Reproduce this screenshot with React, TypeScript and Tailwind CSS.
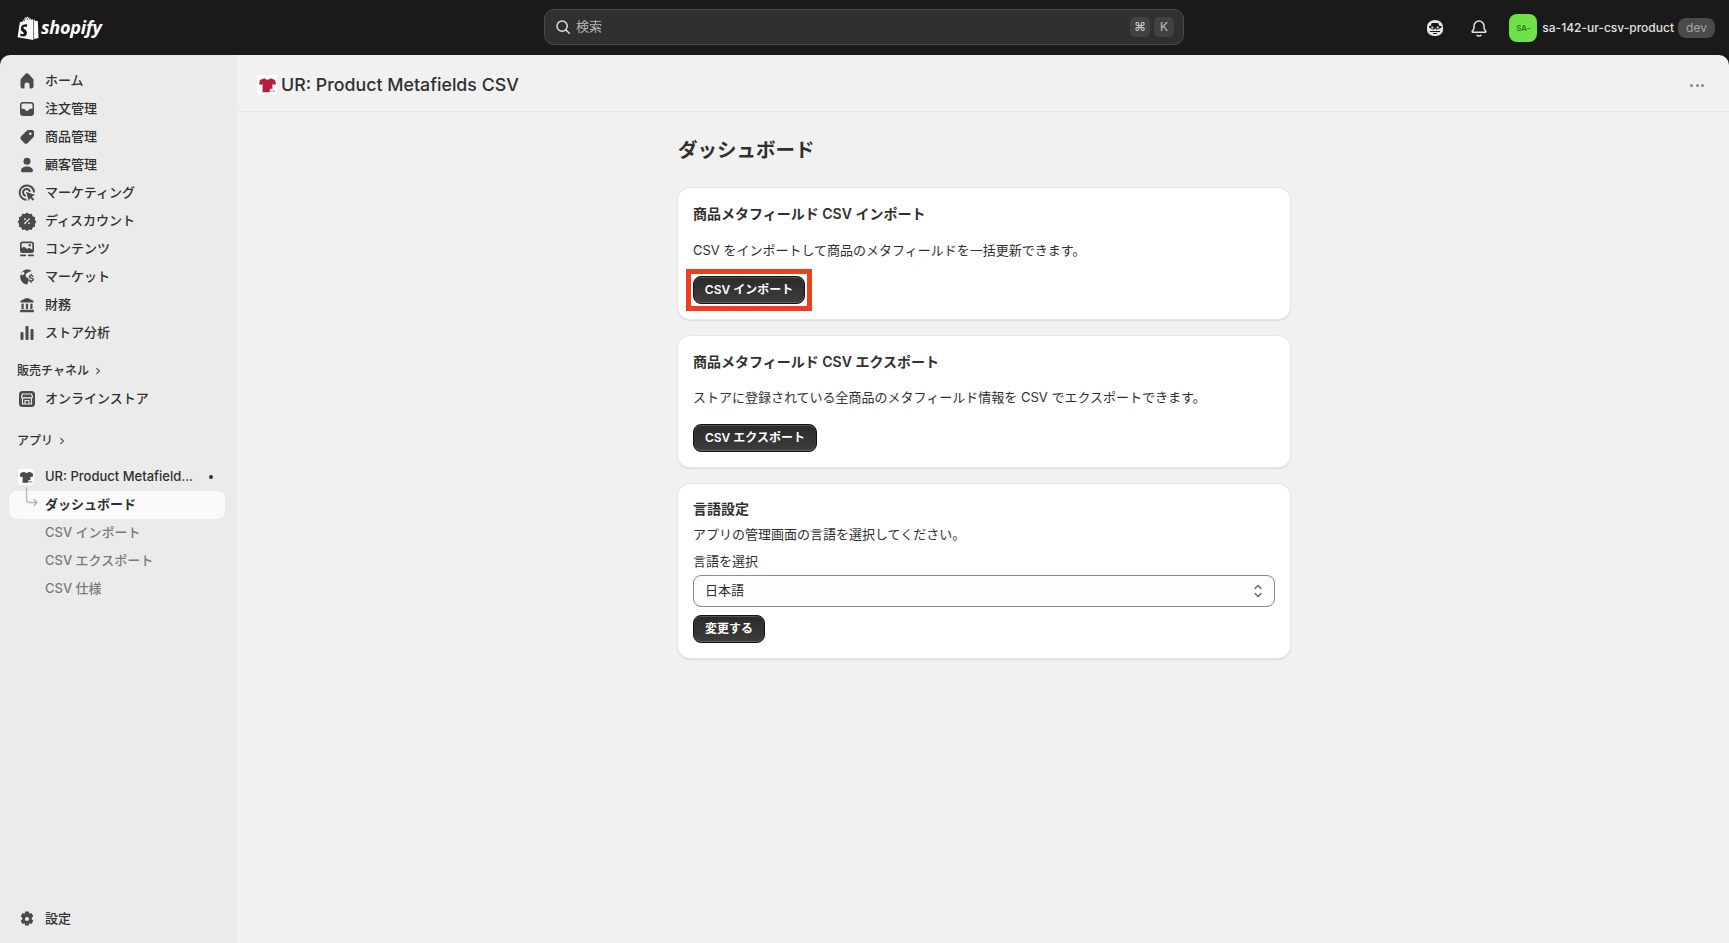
import React from 'react'

const FONT = "[font-family:Inter,'Noto_Sans_CJK_JP',sans-serif]"

type IconProps = { className?: string }

function HomeIcon({ className }: IconProps) {
  return (
    <svg viewBox="0 0 20 20" className={className} fill="currentColor">
      <path d="M8.300 3.100a2.300 2.300 0 0 1 3.400 0l4 4.300c.5.5.8 1.200.8 1.900V15a2.500 2.500 0 0 1-2.500 2.500h-1.500V14a2.500 2.500 0 0 0-5 0v3.500H6A2.500 2.500 0 0 1 3.500 15V9.300c0-.7.3-1.400.8-1.900z" />
    </svg>
  )
}

function OrdersIcon({ className }: IconProps) {
  return (
    <svg viewBox="0 0 20 20" className={className} fill="currentColor">
      <path
        fillRule="evenodd"
        d="M6.250 3h7.500A3.250 3.250 0 0 1 17 6.250v7.500A3.250 3.250 0 0 1 13.750 17h-7.500A3.250 3.250 0 0 1 3 13.750v-7.500A3.250 3.250 0 0 1 6.250 3zM4.500 6.250v3.600H7a1 1 0 0 1 .9.600c.4.900 1.200 1.400 2.100 1.400s1.700-.5 2.100-1.400a1 1 0 0 1 .9-.6h2.500v-3.600c0-.97-.78-1.750-1.750-1.750h-7.500c-.97 0-1.750.78-1.750 1.750z"
      />
    </svg>
  )
}

function TagIcon({ className }: IconProps) {
  return (
    <svg viewBox="0 0 20 20" className={className} fill="currentColor">
      <path
        fillRule="evenodd"
        d="M11.600 3H15a2 2 0 0 1 2 2v3.400c0 .8-.3 1.600-.9 2.100l-5.400 5.400a2.500 2.500 0 0 1-3.500 0l-3.100-3.100a2.500 2.500 0 0 1 0-3.500l5.400-5.400c.5-.6 1.300-.9 2.100-.9zM13.300 8a1.300 1.300 0 1 0 0-2.600 1.300 1.300 0 0 0 0 2.600z"
      />
    </svg>
  )
}

function PersonIcon({ className }: IconProps) {
  return (
    <svg viewBox="0 0 20 20" className={className} fill="currentColor">
      <circle cx="10" cy="6.300" r="3.500" />
      <path d="M10 11.500c-3.500 0-6 1.700-6 4.100 0 1 .7 1.700 1.700 1.700h8.600c1 0 1.700-.7 1.700-1.700 0-2.400-2.500-4.100-6-4.100z" />
    </svg>
  )
}

function TargetIcon({ className }: IconProps) {
  return (
    <svg viewBox="0 0 20 20" className={className} fill="none" stroke="currentColor">
      <path strokeWidth="2" d="M8.700 16.700A7.200 7.200 0 1 1 17 8.700" strokeLinecap="round" />
      <path strokeWidth="2" d="M8 12.600a3.500 3.500 0 1 1 4.700-4.600" strokeLinecap="round" />
      <path fill="currentColor" stroke="none" d="M9 8.800l9.200 3.300-3.500 1.500 2.500 2.700-1.500 1.400-2.500-2.700-1.300 3.300z" />
    </svg>
  )
}

function DiscountIcon({ className }: IconProps) {
  return (
    <svg viewBox="0 0 20 20" className={className}>
      <path
        fill="currentColor"
        d="M10 1.500l2.100 1.600 2.600-.4 1 2.500 2.500 1-.4 2.600 1.600 2.100-1.600 2 .4 2.600-2.500 1-1 2.500-2.600-.4-2.100 1.600-2.100-1.600-2.600.4-1-2.500-2.500-1 .4-2.600-1.600-2 1.600-2.100-.4-2.600 2.500-1 1-2.500 2.600.4z"
      />
      <path stroke="#ebebeb" strokeWidth="1.300" strokeLinecap="round" d="M7.700 12.500l4.600-4.600" />
      <circle cx="7.900" cy="8.200" r=".9" fill="#ebebeb" />
      <circle cx="12.100" cy="12.200" r=".9" fill="#ebebeb" />
    </svg>
  )
}

function ContentIcon({ className }: IconProps) {
  return (
    <svg viewBox="0 0 20 20" className={className} fill="currentColor">
      <path
        fillRule="evenodd"
        d="M5.500 2.500h9A2.500 2.500 0 0 1 17 5v6.500a2.500 2.500 0 0 1-2.500 2.500h-9A2.500 2.500 0 0 1 3 11.500V5a2.500 2.500 0 0 1 2.500-2.500zM4.700 5v4.300l2.300-1.700 3 2.400 2-1.300 3.300 1.800V5a.8.8 0 0 0-.8-.8h-9a.8.8 0 0 0-.8.800zM12.700 7.500a1.200 1.200 0 1 0 0-2.400 1.200 1.200 0 0 0 0 2.400z"
      />
      <rect x="3" y="15.600" width="6.200" height="1.600" rx=".8" />
      <rect x="10.800" y="15.600" width="6.200" height="1.600" rx=".8" />
    </svg>
  )
}

function MarketsIcon({ className }: IconProps) {
  return (
    <svg viewBox="0 0 20 20" className={className} fill="currentColor">
      <path d="M9.700 2.200c1.900 0 3.600.7 4.900 1.800l-3.300 1.300L8.500 7.300l.5 2.700 2.200 1.100.4 3-1.300 3.400a7.700 7.700 0 0 1-.6-15.300z" />
      <path d="M4.600 5.600l2.400-.8.500 1.700-1.500 1.700-2.300-.7z" fill="#ebebeb" />
      <path d="M14.800 6.800v1.100c1 .1 1.900.7 2.100 1.700l-1.400.3c-.1-.5-.5-.8-1.200-.8-.7 0-1 .3-1 .7 0 .5.500.6 1.300.8 1.200.2 2.400.6 2.400 2 0 1.100-.9 1.800-2.200 1.900v1.300h-1.400v-1.300c-1.100-.2-1.900-.9-2.100-1.900l1.400-.3c.2.700.7 1 1.500 1 .8 0 1.300-.3 1.300-.7 0-.5-.5-.7-1.400-.9-1.200-.2-2.300-.6-2.300-1.900 0-1.100.8-1.800 2-2V6.800z" />
    </svg>
  )
}

function BankIcon({ className }: IconProps) {
  return (
    <svg viewBox="0 0 20 20" className={className} fill="currentColor">
      <path d="M8.700 3.300a3 3 0 0 1 2.600 0l5 2.400c.8.400.5 1.800-.5 1.800H4.200c-1 0-1.300-1.400-.5-1.800z" />
      <rect x="4.500" y="8.700" width="2.200" height="5.300" />
      <rect x="8.900" y="8.700" width="2.200" height="5.300" />
      <rect x="13.300" y="8.700" width="2.200" height="5.300" />
      <rect x="3" y="14.800" width="14" height="2.400" rx="1" />
    </svg>
  )
}

function ChartIcon({ className }: IconProps) {
  return (
    <svg viewBox="0 0 20 20" className={className} fill="currentColor">
      <rect x="3.500" y="9" width="3" height="8" rx="1" />
      <rect x="8.500" y="3" width="3" height="14" rx="1" />
      <rect x="13.500" y="6" width="3" height="11" rx="1" />
    </svg>
  )
}

function StoreIcon({ className }: IconProps) {
  return (
    <svg viewBox="0 0 20 20" className={className}>
      <rect x="2" y="2" width="16" height="16" rx="3.500" fill="currentColor" />
      <path
        fill="none"
        stroke="#ebebeb"
        strokeWidth="1.200"
        strokeLinejoin="round"
        d="M5.500 5h9l1 2.700a1.600 1.600 0 0 1-2.800.8 2.100 2.100 0 0 1-2.700 0 2.100 2.100 0 0 1-2.700 0 1.600 1.600 0 0 1-2.800-.8zM5.500 9.500V15h9V9.500M8 15v-3.500h4V15"
      />
    </svg>
  )
}

function GearIcon({ className }: IconProps) {
  return (
    <svg viewBox="0 0 20 20" className={className} fill="currentColor">
      <path
        fillRule="evenodd"
        d="M8.200 2.500h3.600l.6 2.300 2.100-.7 1.800 3.100-1.600 1.600 0 1.400 1.600 1.600-1.800 3.100-2.100-.7-.6 2.300H8.200l-.6-2.300-2.100.7-1.800-3.100 1.600-1.600 0-1.400-1.600-1.600 1.800-3.100 2.100.7zM10 12.100a2.100 2.100 0 1 0 0-4.200 2.100 2.100 0 0 0 0 4.200z"
      />
    </svg>
  )
}

function ShirtIcon({ className, main, tag }: IconProps & { main: string; tag: string }) {
  return (
    <svg viewBox="0 0 20 20" className={className}>
      <path
        fill={main}
        d="M6.800 2.400c.7 1 1.800 1.500 3.200 1.500s2.500-.5 3.200-1.500l4.800 1.700.9 4.700-3 .5-.7-.8V17H4.800V8.500l-.7.800-3-.5.900-4.700z"
      />
      <rect x="12.500" y="13.500" width="6" height="4.500" fill="#fff" />
      <path stroke={tag} strokeWidth="1" d="M13.300 15.800h4.600" />
    </svg>
  )
}

function ShopifyBag({ className }: IconProps) {
  return (
    <svg viewBox="0 0 21 24" className={className}>
      <path
        fill="#fff"
        d="M14.200 4.400l-.6.200C13.200 3.300 12.500 2.300 11.300 2.300h-.2C10.700 1.800 10.300 1.600 9.800 1.600 7.400 1.600 6.200 4.600 5.800 6.100l-2.400.7c-.7.200-.8.300-.9 1L.5 21.400l15.200 2.600V4.300c-.2 0-1.200 0-1.500.1z"
      />
      <path fill="#fff" d="M16.300 4.300l1.400 1.400 2 .1c.1 0 .2.100.2.200L20.600 22l-4.300 1z" />
      <path
        fill="#1a1a1a"
        d="M9.900 9.300l-.7 2.300s-.8-.4-1.700-.3c-1.300.1-1.400 1-1.400 1.200.1 1.200 3.200 1.500 3.400 4.300.1 2.200-1.200 3.800-3.100 3.900-2.300.1-3.500-1.200-3.500-1.200l.5-2s1.200.9 2.200.9c.6 0 .9-.6.800-.9-.1-1.600-2.600-1.500-2.800-4.100-.1-2.200 1.300-4.400 4.500-4.600 1.300-.1 1.800.3 1.800.5z"
      />
      <path fill="none" stroke="#1a1a1a" strokeWidth=".7" d="M6.800 5.800c.6-2 1.500-3.200 2.700-3.500M9.800 5.100c0-1 .4-2.300 1.400-2.500M12.300 4.600c0-.7-.2-1.500-.7-1.900" />
    </svg>
  )
}

function MaskIcon({ className }: IconProps) {
  return (
    <svg viewBox="0 0 20 20" className={className}>
      <path fill="#e3e3e3" d="M10 2c4.500 0 8 2.800 8 7.500v2c0 4-3.300 6.500-8 6.500s-8-2.500-8-6.500v-2C2 4.800 5.500 2 10 2z" />
      <path fill="#1a1a1a" d="M6.800 5h6.400l1.200 3h2.100v1.400l-3.500 2.100h-1.600L10 10.300l-.9 1.200H7.500L4 9.400V8h1.600z" />
      <circle cx="7.300" cy="9.600" r="1.100" fill="#e3e3e3" />
      <circle cx="12.700" cy="9.600" r="1.100" fill="#e3e3e3" />
      <path fill="#1a1a1a" d="M5 13h10v1.100H5zM8 15h4v1H8z" />
    </svg>
  )
}

function BellIcon({ className }: IconProps) {
  return (
    <svg viewBox="0 0 20 20" className={className} fill="none" stroke="#e3e3e3" strokeWidth="1.500" strokeLinejoin="round" strokeLinecap="round">
      <path d="M10 3a5 5 0 0 0-5 5v1.800c0 .8-.3 1.500-.8 2.100l-.9 1.100c-.4.500 0 1.300.7 1.300h12c.7 0 1.100-.8.700-1.300l-.9-1.100c-.5-.6-.8-1.300-.8-2.100V8a5 5 0 0 0-5-5z" />
      <path d="M8 17.200c.5.500 1.200.8 2 .8s1.500-.3 2-.8" />
    </svg>
  )
}

function SearchIcon({ className }: IconProps) {
  return (
    <svg viewBox="0 0 20 20" className={className} fill="none" stroke="#e3e3e3" strokeWidth="1.600" strokeLinecap="round">
      <circle cx="9" cy="9" r="5.700" />
      <path d="M13.300 13.300l3.700 3.700" />
    </svg>
  )
}

function SmallChevron() {
  return (
    <svg viewBox="0 0 8 8" className="w-2 h-2 ml-[5px]" fill="none" stroke="#4a4a4a" strokeWidth="1.100" strokeLinecap="round" strokeLinejoin="round">
      <path d="M2.700 1.300L5.400 4 2.700 6.700" />
    </svg>
  )
}

const navItems = [
  { label: 'ホーム', icon: HomeIcon },
  { label: '注文管理', icon: OrdersIcon },
  { label: '商品管理', icon: TagIcon },
  { label: '顧客管理', icon: PersonIcon },
  { label: 'マーケティング', icon: TargetIcon },
  { label: 'ディスカウント', icon: DiscountIcon },
  { label: 'コンテンツ', icon: ContentIcon },
  { label: 'マーケット', icon: MarketsIcon },
  { label: '財務', icon: BankIcon },
  { label: 'ストア分析', icon: ChartIcon },
]

function NavItem({ label, icon: Icon }: { label: string; icon: React.ComponentType<IconProps> }) {
  return (
    <div className="flex items-center h-7 pl-[9px] text-[13px] font-medium text-[#303030]">
      <Icon className="w-5 h-5 text-[#4a4a4a] shrink-0" />
      <span className="ml-[8px]">{label}</span>
    </div>
  )
}

function SectionLabel({ label }: { label: string }) {
  return (
    <div className="flex items-center h-7 pl-[9px] text-[12px] font-medium text-[#303030]">
      {label}
      <SmallChevron />
    </div>
  )
}

function Sidebar() {
  return (
    <aside className="w-[237px] shrink-0 bg-[#ebebeb] flex flex-col pt-3 px-[8px] pb-[10px]">
      {navItems.map(item => (
        <NavItem key={item.label} label={item.label} icon={item.icon} />
      ))}

      <div className="mt-[10px]">
        <SectionLabel label="販売チャネル" />
      </div>
      <NavItem label="オンラインストア" icon={StoreIcon} />

      <div className="mt-[14px]">
        <SectionLabel label="アプリ" />
      </div>

      <div className="mt-[8px] flex items-center h-7 pl-[10px] text-[13px] font-medium text-[#303030]">
        <span className="w-4 h-4 rounded-[3px] bg-white flex items-center justify-center shrink-0">
          <ShirtIcon className="w-[15px] h-[15px]" main="#4a4a4a" tag="#4a4a4a" />
        </span>
        <span className="ml-[11px] w-[149px] whitespace-nowrap">UR: Product Metafield...</span>
        <span className="ml-[15px] w-[4px] h-[4px] rounded-full bg-[#303030]" />
      </div>

      <div className="relative h-7 ml-px mr-[4px] rounded-lg bg-[#fafafa] flex items-center pl-[36px] text-[13px] font-semibold text-[#303030]">
        <svg viewBox="0 0 14 22" className="absolute left-[16px] -top-[4px] w-[14px] h-[22px]" fill="none" stroke="#b5b5b5" strokeWidth="1.300" strokeLinecap="round" strokeLinejoin="round">
          <path d="M1.500 1v11.500c0 2 1 3 3 3H12M9 12.500l3 3-3 3" />
        </svg>
        ダッシュボード
      </div>
      {['CSV インポート', 'CSV エクスポート', 'CSV 仕様'].map(label => (
        <div key={label} className="h-7 flex items-center pl-[37px] text-[13px] font-medium text-[#7a7a7a]">
          {label}
        </div>
      ))}

      <div className="mt-auto">
        <NavItem label="設定" icon={GearIcon} />
      </div>
    </aside>
  )
}

function Topbar() {
  return (
    <header className="h-[55px] shrink-0 bg-[#1a1a1a] relative flex items-center pl-[17px] pr-[14px]">
      <div className="flex items-center w-[527px]">
        <ShopifyBag className="w-[22px] h-[25px]" />
        <span className="ml-[2px] mb-[2px] text-[18px] leading-none font-bold italic text-white tracking-[-0.2px] [font-family:'Open_Sans',sans-serif]">
          shopify
        </span>
      </div>
      <div className="mb-px w-[640px] h-9 rounded-[10px] bg-[#303030] border border-[#4a4a4a] flex items-center pl-[9px] pr-[9px]">
        <SearchIcon className="w-[18px] h-[18px]" />
        <span className="ml-[4px] text-[13px] text-[#b5b5b5]">検索</span>
        <span className="ml-auto w-5 h-5 rounded-[5px] bg-[#424242] flex items-center justify-center text-[12px] text-[#d0d0d0]">⌘</span>
        <span className="ml-1 w-5 h-5 rounded-[5px] bg-[#424242] flex items-center justify-center text-[12px] text-[#c0c0c0]">K</span>
      </div>
      <div className="ml-auto flex items-center">
        <MaskIcon className="w-5 h-5" />
        <BellIcon className="ml-[24px] w-5 h-5" />
        <span className="ml-[20px] w-7 h-7 rounded-lg bg-[#6fe24a] flex items-center justify-center text-[8px] font-medium text-[#2a6b1a]">SA-</span>
        <span className="ml-[5px] text-[12px] font-medium text-[#e3e3e3]">sa-142-ur-csv-product</span>
        <span className="ml-[4px] w-[37px] h-5 rounded-lg bg-[#4a4a4a] flex items-center justify-center text-[12px] text-[#a8a8a8]">dev</span>
      </div>
    </header>
  )
}

function DarkButton({ label, className }: { label: string; className: string }) {
  return (
    <button className={`h-7 rounded-lg border border-[#111] bg-gradient-to-b from-[#2a2a2a] to-[#3d3d3d] shadow-[inset_0_1px_0_#555,inset_0_-1px_0_#666] text-white text-[12px] font-semibold flex items-center justify-center ${className}`}>
      {label}
    </button>
  )
}

function Card({ className, children }: { className: string; children: React.ReactNode }) {
  return (
    <section className={`bg-white rounded-xl px-[15px] shadow-[0_0_0_1px_#e6e6e6,0_1px_2px_rgba(0,0,0,0.28)] ${className}`}>
      {children}
    </section>
  )
}

export default function App() {
  return (
    <div className={`w-[1729px] h-[943px] overflow-hidden flex flex-col bg-[#1a1a1a] ${FONT}`}>
      <Topbar />
      <div className="flex-1 min-h-0 flex rounded-t-[10px] overflow-hidden">
        <Sidebar />
        <main className="flex-1 bg-[#f1f1f1] flex flex-col">
          <div className="h-[57px] shrink-0 border-b border-[#e6e6e6] flex items-center pt-1 pl-[20px] pr-[25px]">
            <span className="w-5 h-5 rounded-[3px] bg-white flex items-center justify-center">
              <ShirtIcon className="w-[19px] h-[19px]" main="#b51f3c" tag="#888" />
            </span>
            <h1 className="ml-[4px] text-[17.800px] leading-none font-medium text-[#303030]">UR: Product Metafields CSV</h1>
            <span className="ml-auto flex gap-[2.500px]">
              <i className="w-[3px] h-[3px] rounded-full bg-[#8a8a8a]" />
              <i className="w-[3px] h-[3px] rounded-full bg-[#8a8a8a]" />
              <i className="w-[3px] h-[3px] rounded-full bg-[#8a8a8a]" />
            </span>
          </div>

          <div className="w-[612px] mx-auto pt-[24px] ml-[441px]">
            <h2 className="text-[19.500px] leading-[28px] font-semibold text-[#303030]">ダッシュボード</h2>

            <Card className="mt-[24px] h-[131px] pt-[16px]">
              <h3 className="text-[14px] leading-5 font-semibold text-[#303030]">商品メタフィールド CSV インポート</h3>
              <p className="mt-[16px] text-[13px] leading-5 text-[#303030]">CSV をインポートして商品のメタフィールドを一括更新できます。</p>
              <div className="relative w-fit mt-[16px]">
                <DarkButton label="CSV インポート" className="w-[112px]" />
                <div className="absolute -left-[7px] -top-[7px] w-[126px] h-[42px] border-[5px] border-[#ee3d20]" />
              </div>
            </Card>

            <Card className="mt-[17px] h-[131px] pt-[16px]">
              <h3 className="text-[14px] leading-5 font-semibold text-[#303030]">商品メタフィールド CSV エクスポート</h3>
              <p className="mt-[15px] text-[13px] leading-5 text-[#303030]">ストアに登録されている全商品のメタフィールド情報を CSV でエクスポートできます。</p>
              <DarkButton label="CSV エクスポート" className="mt-[17px] w-[124px]" />
            </Card>

            <Card className="mt-[17px] h-[174px] pt-[15px]">
              <h3 className="text-[14px] leading-5 font-semibold text-[#303030]">言語設定</h3>
              <p className="mt-[5px] text-[13px] leading-[20px] text-[#303030]">アプリの管理画面の言語を選択してください。</p>
              <div className="mt-[7px] text-[13px] leading-5 text-[#303030]">言語を選択</div>
              <div className="mt-[4px] h-8 rounded-lg border border-[#8a8a8a] bg-[#fdfdfd] flex items-center pl-[11px] pr-[10px] text-[13px] text-[#303030]">
                日本語
                <svg viewBox="0 0 12 18" className="ml-auto w-3 h-[18px]" fill="none" stroke="#616161" strokeWidth="1.300" strokeLinecap="round" strokeLinejoin="round">
                  <path d="M3 6.500l3-3 3 3M3 11.500l3 3 3-3" />
                </svg>
              </div>
              <DarkButton label="変更する" className="mt-[8px] w-[72px]" />
            </Card>
          </div>
        </main>
      </div>
    </div>
  )
}
